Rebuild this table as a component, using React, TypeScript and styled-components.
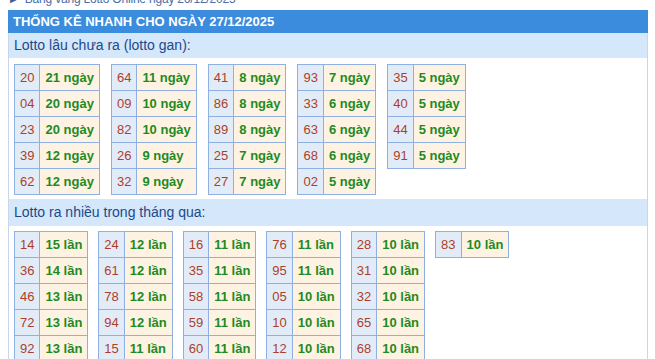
import React from "react";
import styled, { createGlobalStyle } from "styled-components";

const Global = createGlobalStyle`
  html, body { margin: 0; padding: 0; background: #ffffff; overflow: hidden; }
  body { padding: 0 8px; font-family: "Liberation Sans", Arial, sans-serif; }
`;

const TopLink = styled.div`
  margin-top: -10px;
  height: 18px;
  line-height: 18px;
  font-size: 12px;
  letter-spacing: -0.2px;
  color: #4a6ea8;
  white-space: nowrap;
  display: flex;
  gap: 7px;
  padding-left: 2px;
`;

const Bullet = styled.span`
  color: #3b5f93;
  font-size: 10px;
`;

const Panel = styled.div`
  margin-top: 2px;
  width: 640px;
`;

const Header = styled.div`
  height: 23px;
  line-height: 23px;
  background: #3b8cdd;
  color: #ffffff;
  font-weight: bold;
  font-size: 13px;
  padding-left: 5px;
  white-space: nowrap;
`;

const Body = styled.div`
  border-left: 1px solid #c8d6e8;
  border-right: 1px solid #c8d6e8;
`;

const SubTitle = styled.div<{ $h: number }>`
  height: ${(p) => p.$h}px;
  line-height: ${(p) => p.$h}px;
  background: #d5e7fa;
  color: #1b4a8a;
  font-size: 14px;
  padding-left: 5px;
  white-space: nowrap;
`;

const TableRow = styled.div<{ $pt: number; $pb: number; $gap: number }>`
  display: flex;
  flex-wrap: wrap;
  align-items: flex-start;
  gap: ${(p) => p.$gap}px;
  padding: ${(p) => p.$pt}px 5px ${(p) => p.$pb}px 5px;
`;

const Table = styled.table`
  border-collapse: collapse;
  font-size: 13px;
  line-height: 15px;
`;

const NumCell = styled.td`
  border: 1px solid #8fb0e2;
  background: #e2ecf9;
  color: #ad3f28;
  padding: 5px 5px;
  text-align: center;
`;

const ValCell = styled.td`
  border: 1px solid #8fb0e2;
  background: #fef3e2;
  color: #1f8a1f;
  font-weight: bold;
  padding: 5px 5px;
  white-space: nowrap;
`;

type Pair = [string, number];

const gan: Pair[][] = [
  [["20", 21], ["04", 20], ["23", 20], ["39", 12], ["62", 12]],
  [["64", 11], ["09", 10], ["82", 10], ["26", 9], ["32", 9]],
  [["41", 8], ["86", 8], ["89", 8], ["25", 7], ["27", 7]],
  [["93", 7], ["33", 6], ["63", 6], ["68", 6], ["02", 5]],
  [["35", 5], ["40", 5], ["44", 5], ["91", 5]],
];

const nhieu: Pair[][] = [
  [["14", 15], ["36", 14], ["46", 13], ["72", 13], ["92", 13]],
  [["24", 12], ["61", 12], ["78", 12], ["94", 12], ["15", 11]],
  [["16", 11], ["35", 11], ["58", 11], ["59", 11], ["60", 11]],
  [["76", 11], ["95", 11], ["05", 10], ["10", 10], ["12", 10]],
  [["28", 10], ["31", 10], ["32", 10], ["65", 10], ["68", 10]],
  [["83", 10]],
];

function StatTable({ rows, unit }: { rows: Pair[]; unit: string }) {
  return (
    <Table>
      <tbody>
        {rows.map(([n, v]) => (
          <tr key={n}>
            <NumCell>{n}</NumCell>
            <ValCell>
              {v} {unit}
            </ValCell>
          </tr>
        ))}
      </tbody>
    </Table>
  );
}

export default function App() {
  return (
    <>
      <Global />
      <TopLink>
        <Bullet>▶</Bullet>
        <span>Bảng vàng Lotto Online ngày 26/12/2025</span>
      </TopLink>
      <Panel>
        <Header>THỐNG KÊ NHANH CHO NGÀY 27/12/2025</Header>
        <Body>
          <SubTitle $h={25}>Lotto lâu chưa ra (lotto gan):</SubTitle>
          <TableRow $pt={6} $pb={4} $gap={11}>
            {gan.map((t, i) => (
              <StatTable key={i} rows={t} unit="ngày" />
            ))}
          </TableRow>
          <SubTitle $h={27}>Lotto ra nhiều trong tháng qua:</SubTitle>
          <TableRow $pt={5} $pb={4} $gap={10}>
            {nhieu.map((t, i) => (
              <StatTable key={i} rows={t} unit="lần" />
            ))}
          </TableRow>
        </Body>
      </Panel>
    </>
  );
}
